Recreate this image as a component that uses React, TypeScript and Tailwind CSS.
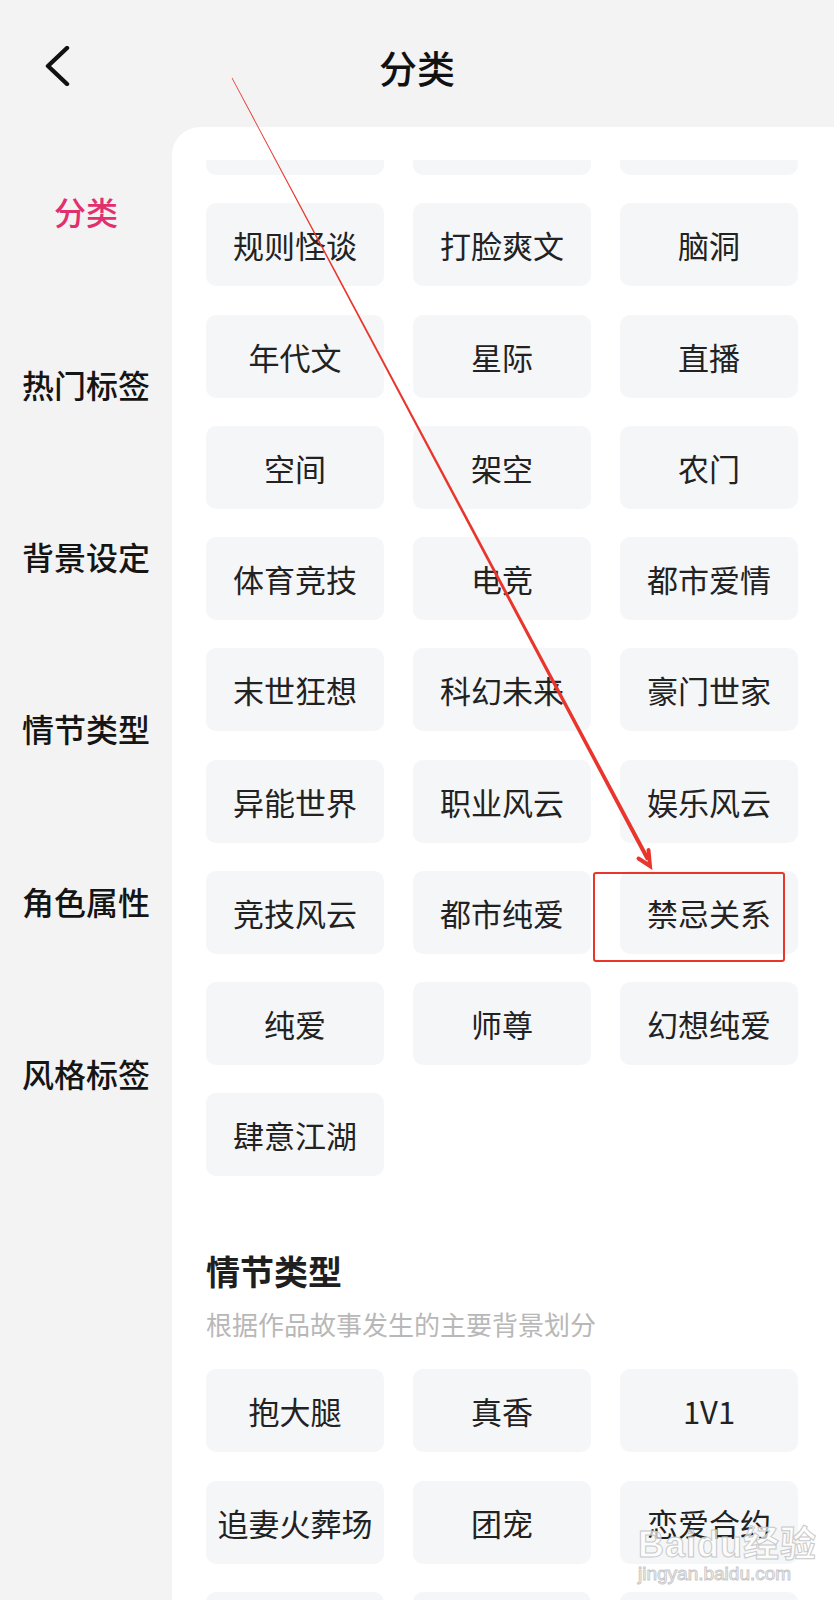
import React from 'react';

const sideNav = ['分类', '热门标签', '背景设定', '情节类型', '角色属性', '风格标签'];

const categoryTags = [
  '', '', '',
  '规则怪谈', '打脸爽文', '脑洞',
  '年代文', '星际', '直播',
  '空间', '架空', '农门',
  '体育竞技', '电竞', '都市爱情',
  '末世狂想', '科幻未来', '豪门世家',
  '异能世界', '职业风云', '娱乐风云',
  '竞技风云', '都市纯爱', '禁忌关系',
  '纯爱', '师尊', '幻想纯爱',
  '肆意江湖',
];

const plotTags = ['抱大腿', '真香', '1V1', '追妻火葬场', '团宠', '恋爱合约', '', '', ''];

const Tag = ({ label }: { label: string }) => (
  <div className="flex h-[83px] items-center justify-center rounded-[10px] bg-[#f5f6f8] text-[31px] leading-none text-[#222]">
    {label}
  </div>
);

const TagGrid = ({ tags }: { tags: string[] }) => (
  <div className="grid grid-cols-3 gap-x-[29px] gap-y-[28.25px]">
    {tags.map((t, i) => (
      <Tag key={i} label={t} />
    ))}
  </div>
);

export default function App() {
  return (
    <div className="relative h-[1600px] w-[834px] overflow-hidden bg-[#f3f3f3] font-['Noto_Sans_CJK_SC',sans-serif]">
      {/* title bar */}
      <header className="grid h-[127px] grid-cols-[1fr_auto_1fr] items-start">
        <div className="pl-[44px] pt-[46px]">
          <svg width="28" height="40" viewBox="0 0 28 40" fill="none">
            <path d="M23 2 L4 20 L23 38" stroke="#111" strokeWidth="4.4" strokeLinecap="round" strokeLinejoin="round" />
          </svg>
        </div>
        <h1 className="pt-[44px] text-[38px] font-medium leading-[46px] text-[#111]">分类</h1>
        <div />
      </header>

      <div className="flex">
        <nav className="-mt-[2px] w-[172px] shrink-0">
          {sideNav.map((item, i) => (
            <div
              key={item}
              className={`flex h-[172.4px] items-center justify-center text-[32px] font-medium leading-none ${
                i === 0 ? 'text-[#e2306e]' : 'text-[#151515]'
              }`}
            >
              {item}
            </div>
          ))}
        </nav>

        <main className="h-[1480px] flex-1 rounded-tl-[28px] bg-white pt-[33px]">
          <div className="h-full overflow-hidden pl-[34px] pr-[36px]">
            <div className="-mt-[68px]">
              <TagGrid tags={categoryTags} />

              <h2 className="mt-[74px] text-[34px] font-bold leading-[41px] text-[#1f1f1f]">情节类型</h2>
              <p className="mt-[17px] text-[26px] leading-[31px] text-[#b8b8b8]">根据作品故事发生的主要背景划分</p>
              <div className="mt-[30px]">
                <TagGrid tags={plotTags} />
              </div>
            </div>
          </div>
        </main>
      </div>

      {/* red markup drawn over the page */}
      <svg className="pointer-events-none absolute left-0 top-0" width="834" height="1600" viewBox="0 0 834 1600">
        <polygon points="231.7,78.2 232.3,77.8 649.8,858.6 646.2,860.5" fill="#e8362c" />
        <polyline points="638.5,858.5 650,866 648.5,850" fill="none" stroke="#e8362c" strokeWidth="4" strokeLinecap="round" strokeLinejoin="miter" />
        <rect x="594" y="873" width="190" height="88" rx="2" fill="none" stroke="#e8362c" strokeWidth="2" />
      </svg>

      {/* site watermark */}
      <div className="pointer-events-none absolute left-[638px] top-[1526px] flex flex-col items-start font-['Liberation_Sans','Noto_Sans_CJK_SC',sans-serif] text-white/70 [-webkit-text-stroke:1px_#c9c9c9]">
        <span className="text-[36px] font-bold leading-[38px] tracking-[1px]">Baidu经验</span>
        <span className="text-[19px] leading-[20px]">jingyan.baidu.com</span>
      </div>
    </div>
  );
}
